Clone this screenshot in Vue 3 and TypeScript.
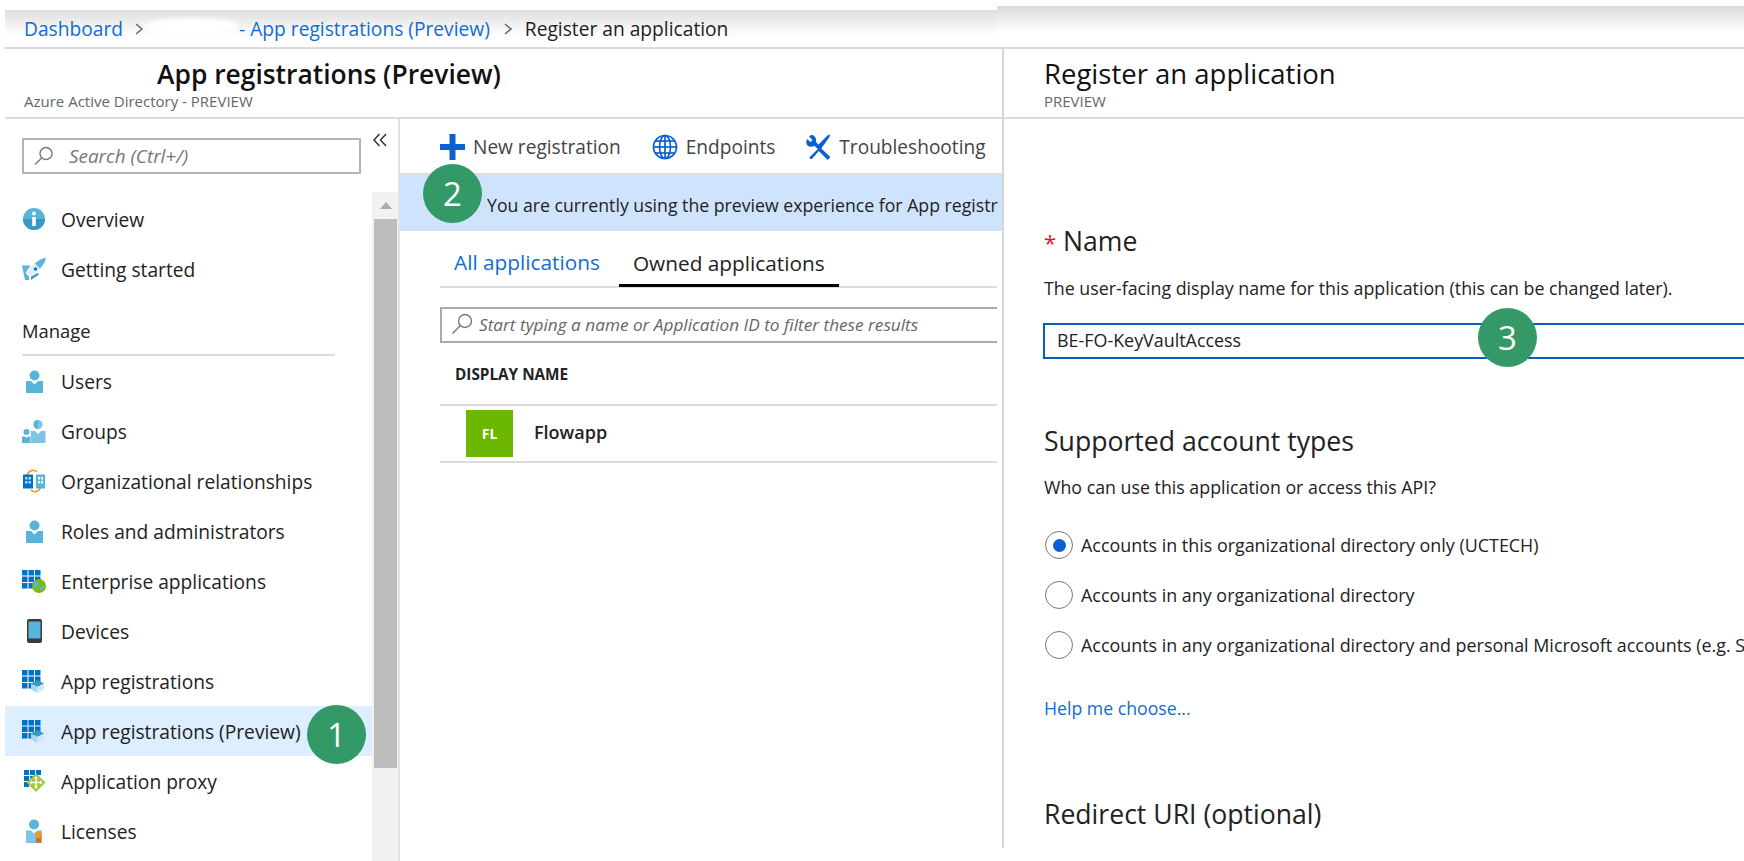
<template>
  <div class="page">
    <div class="main">
      <div class="crumbs">
        <a class="link">Dashboard</a>
        <svg class="sep first" width="10" height="14" viewBox="0 0 10 14"><polyline points="2,2 8,7 2,12" /></svg>
        <span class="blot"></span>
        <a class="link">- App registrations (Preview)</a>
        <svg class="sep" width="10" height="14" viewBox="0 0 10 14"><polyline points="2,2 8,7 2,12" /></svg>
        <span class="crumb-here">Register an application</span>
      </div>
      <div class="heading">
        <h1 class="title">App registrations (Preview)</h1>
        <div class="subtitle">Azure Active Directory - PREVIEW</div>
      </div>
      <div class="work">
        <aside class="nav">
          <div class="nav-top">
            <div class="search">
              <svg width="22" height="22" viewBox="0 0 22 22" class="lens"><circle cx="13" cy="8.5" r="6" /><line x1="8.6" y1="12.9" x2="2" y2="19.5" /></svg>
              <span>Search (Ctrl+/)</span>
            </div>
            <svg class="collapse" width="14" height="14" viewBox="0 0 14 14"><polyline points="6.5,1 1,7 6.5,13" /><polyline points="13,1 7.5,7 13,13" /></svg>
          </div>
          <div class="nav-body">
            <div class="nav-list">
              <template v-for="item in navItems" :key="item.label">
                <div v-if="item.icon === 'header'" class="nav-section">{{ item.label }}</div>
                <div v-else class="nav-item" :class="{ active: item.active }">
                  <svg class="nav-icon" width="24" height="24" viewBox="0 0 24 24">
                    <template v-if="item.icon === 'info'">
                      <circle cx="12" cy="12" r="11" fill="#59b4d9" />
                      <path d="M1 12a11 11 0 0 0 22 0z" fill="#3999c6" />
                      <circle cx="12" cy="6.5" r="2" fill="#fff" />
                      <rect x="10.2" y="10" width="3.6" height="9" fill="#fff" />
                    </template>
                    <template v-else-if="item.icon === 'rocket'">
                      <path d="M0 8.500h8.500L3.500 16l3.500 3.500V23H3z" fill="#59b4d9" />
                      <path d="M9 23l8-5.500-1.500-1.500-6.500 3.500z" fill="#3999c6" />
                      <path d="M24 .5C18 2 13 5 8.500 10.500L4.500 16l4 4 6-3.500C19.500 12 22.500 6.500 24 .5z" fill="#e4edf2" />
                      <path d="M24 .5C20 1.500 16 3.500 13 6.500l5 5C21 8.500 23 4.500 24 .5z" fill="#59b4d9" />
                      <circle cx="13.500" cy="12" r="1.700" fill="#0072c6" />
                    </template>
                    <template v-else-if="item.icon === 'user'">
                      <circle cx="12.500" cy="6.500" r="5" fill="#59b4d9" />
                      <path d="M4 12h5l3.500 3.500L16 12h5v12H4z" fill="#59b4d9" />
                    </template>
                    <template v-else-if="item.icon === 'group'">
                      <circle cx="16" cy="5.500" r="4.500" fill="#7fc4e2" />
                      <path d="M16 1a4.500 4.500 0 0 0 0 9z" fill="#59b4d9" />
                      <path d="M9 12h4l3 3 3-3h4.500v12H9z" fill="#7fc4e2" />
                      <circle cx="4.500" cy="13" r="3" fill="#59b4d9" />
                      <path d="M0 17.500h3l1.500 1.500L6 17.500h2.500V24H0z" fill="#59b4d9" />
                    </template>
                    <template v-else-if="item.icon === 'org'">
                      <path d="M5 6C7 1 12 0 15 3M19 18c-2 5-7 6-10 3" fill="none" stroke="#f7941d" stroke-width="1.500" />
                      <rect x="1" y="5.500" width="10" height="14" fill="#0072c6" />
                      <rect x="14" y="5.500" width="9" height="14" fill="#59b4d9" />
                      <path d="M3 8h2.500v2.500H3zm3.500 0H9v2.500H6.500zM3 12h2.500v2.500H3zm3.500 0H9v2.500H6.500z" fill="#a9d6ee" />
                      <path d="M16 8h2v2.500h-2zm3 0h2v2.500h-2zm-3 4h2v2.500h-2zm3 0h2v2.500h-2z" fill="#fff" />
                    </template>
                    <template v-else-if="item.icon === 'enterprise'">
                      <path d="M0 1h5.500v5.500H0zm6.500 0H12v5.500H6.500zM13 1h5.500v5.500H13zM0 7.500h5.500V13H0zm6.500 0H12V13H6.500zm6.500 0h5.500V13H13zM0 14h5.500v5.500H0zm6.500 0H12v5.500H6.500z" fill="#0072c6" />
                      <circle cx="17" cy="17" r="7" fill="#7fba00" />
                      <path d="M12 13c3-1 5 0 5 2s-3 2-3 4-1 2-2-1c-.6-2-.6-3 0-5zm8 3c2-.5 3 1 2 3s-3 3-4 2 0-4 2-5z" fill="#59b4d9" />
                    </template>
                    <template v-else-if="item.icon === 'device'">
                      <rect x="5" y="0" width="15" height="24" rx="2" fill="#3a3a3a" />
                      <rect x="6.500" y="2.500" width="12" height="17" fill="#59b4d9" />
                    </template>
                    <template v-else-if="item.icon === 'apps'">
                      <path d="M0 1h5.500v5.500H0zm6.500 0H12v5.500H6.500zM13 1h5.500v5.500H13zM0 7.500h5.500V13H0zm6.500 0H12V13H6.500zm6.500 0h5.500V13H13zM0 14h5.500v5.500H0zm6.500 0H12v5.500H6.500z" fill="#0072c6" />
                      <path d="M15.500 11l6.500 3.500-6.500 3.500L9 14.500z" fill="#3999c6" />
                      <path d="M9 14.500l6.500 3.500v6L9 20.500z" fill="#a9d6ee" />
                      <path d="M22 14.500L15.500 18v6l6.500-3.500z" fill="#cfe8f5" />
                    </template>
                    <template v-else-if="item.icon === 'proxy'">
                      <path d="M2 1h5v5H2zm6 0h5v5H8zm6 0h5v5h-5zM2 7h5v5H2zm6 0h5v5H8zM2 13h5v5H2z" fill="#0072c6" />
                      <path d="M14 4l9.500 9.500L14 23l-9.500-9.500z" fill="#a4c639" />
                      <path d="M14 7l2.200 2.500h-1.500v3.300H18V11.300l2.500 2.200-2.500 2.200v-1.500h-3.300v3.300h1.500L14 20l-2.200-2.500h1.500v-3.300H10v1.500l-2.500-2.200 2.500-2.200v1.500h3.300V9.500h-1.500z" fill="#fff" />
                    </template>
                    <template v-else-if="item.icon === 'license'">
                      <circle cx="12" cy="5.500" r="5" fill="#59b4d9" />
                      <path d="M4 11.500h5l3 3 3-3h5V24H4z" fill="#7fc4e2" />
                      <path d="M14 17h5v8l-2.500-2-2.500 2z" fill="#dc6a1d" />
                      <circle cx="16.500" cy="16" r="3.200" fill="#f7941d" />
                    </template>
                  </svg>
                  <span>{{ item.label }}</span>
                </div>
              </template>
            </div>
            <div class="scroll">
              <span class="scroll-up"></span>
              <div class="scroll-thumb"></div>
            </div>
          </div>
        </aside>

        <section class="content">
          <div class="toolbar">
            <div class="tool tool-new">
              <svg width="25" height="26" viewBox="0 0 25 26"><path d="M9.500 0h6v10h9.500v6h-9.500v10h-6V16H0v-6h9.500z" fill="#0b5fd3" /></svg>
              <span>New registration</span>
            </div>
            <div class="tool">
              <svg width="26" height="26" viewBox="0 0 26 26" class="globe"><circle cx="13" cy="13" r="11.500" /><ellipse cx="13" cy="13" rx="5.500" ry="11.500" /><line x1="13" y1="1.500" x2="13" y2="24.500" /><line x1="1.500" y1="13" x2="24.500" y2="13" /><line x1="3.500" y1="7" x2="22.500" y2="7" /><line x1="3.500" y1="19" x2="22.500" y2="19" /></svg>
              <span>Endpoints</span>
            </div>
            <div class="tool">
              <svg width="25" height="26" viewBox="0 0 25 26"><path d="M5 1L3 2.500l3.500 3.500-2 2L1 5 .3 7.500c-.5 3 2.500 6 6 5l2.500-.5 3 3-8 8c-.6 1 .4 2.500 2 2l7-8 3 3 6 6 2.500-3-9-8.500 1-1.500L23.500 3 24 .5l-2 .5-9.500 9.500L10 8c1-4-2-7.500-5-7z" fill="#0b5fd3" /></svg>
              <span>Troubleshooting</span>
            </div>
          </div>
          <div class="banner"><span>You are currently using the preview experience for App registr</span></div>
          <div class="apps-pane">
            <div class="tabs">
              <div class="tab tab-link">All applications</div>
              <div class="tab tab-on">Owned applications</div>
            </div>
            <div class="filter">
              <svg width="24" height="24" viewBox="0 0 24 24" class="lens"><circle cx="15" cy="9" r="6.500" /><line x1="10.200" y1="13.800" x2="2.500" y2="21.500" /></svg>
              <span>Start typing a name or Application ID to filter these results</span>
            </div>
            <div class="col-head">DISPLAY NAME</div>
            <div class="app-row">
              <div class="app-badge">FL</div>
              <div class="app-name">Flowapp</div>
            </div>
          </div>
        </section>
      </div>
    </div>

    <div class="blade">
      <div class="blade-top"></div>
      <div class="blade-inner">
        <div class="heading blade-heading">
          <h1 class="title">Register an application</h1>
          <div class="subtitle">PREVIEW</div>
        </div>
        <div class="form">
          <h2 class="field-title name-title"><span class="req">*</span> Name</h2>
          <p class="hint">The user-facing display name for this application (this can be changed later).</p>
          <div class="name-input">BE-FO-KeyVaultAccess</div>
          <h2 class="field-title types-title">Supported account types</h2>
          <p class="hint">Who can use this application or access this API?</p>
          <div class="radios">
            <div v-for="(opt, i) in accountTypes" :key="opt" class="radio-row">
              <span class="radio"><span v-if="i === 0" class="radio-dot"></span></span>
              <span>{{ opt }}</span>
            </div>
          </div>
          <a class="help">Help me choose...</a>
          <h2 class="field-title redirect-title">Redirect URI (optional)</h2>
        </div>
      </div>
    </div>

    <div class="step step-1">1</div>
    <div class="step step-2">2</div>
    <div class="step step-3">3</div>
  </div>
</template>

<script setup lang="ts">
interface NavItem {
  label: string;
  icon: string;
  active?: boolean;
}

const navItems: NavItem[] = [
  { label: 'Overview', icon: 'info' },
  { label: 'Getting started', icon: 'rocket' },
  { label: 'Manage', icon: 'header' },
  { label: 'Users', icon: 'user' },
  { label: 'Groups', icon: 'group' },
  { label: 'Organizational relationships', icon: 'org' },
  { label: 'Roles and administrators', icon: 'user' },
  { label: 'Enterprise applications', icon: 'enterprise' },
  { label: 'Devices', icon: 'device' },
  { label: 'App registrations', icon: 'apps' },
  { label: 'App registrations (Preview)', icon: 'apps', active: true },
  { label: 'Application proxy', icon: 'proxy' },
  { label: 'Licenses', icon: 'license' },
];

const accountTypes = [
  'Accounts in this organizational directory only (UCTECH)',
  'Accounts in any organizational directory',
  'Accounts in any organizational directory and personal Microsoft accounts (e.g. S',
];
</script>

<style>
html,
body {
  margin: 0;
  background: #fff;
}
</style>

<style scoped>
.page {
  position: relative;
  display: flex;
  width: 1744px;
  height: 861px;
  overflow: hidden;
  background: #fff;
  color: #222;
  font-family: "Open Sans", "Liberation Sans", sans-serif;
  font-size: 19.2px;
}

.main {
  width: 997px;
  margin-left: 5px;
  flex: none;
  display: flex;
  flex-direction: column;
}

.crumbs {
  display: flex;
  align-items: center;
  height: 37px;
  margin-top: 10px;
  width: 992px;
  padding-left: 19px;
  box-sizing: border-box;
  background: linear-gradient(#dedede, #fff 68%);
  font-size: 19.2px;
}

.link {
  color: #0f6cd6;
}

.sep {
  fill: none;
  stroke: #666;
  stroke-width: 1.5;
  margin: 0 12px 0 13px;
}

.sep.first {
  margin: 0 0 0 11px;
}

.blot {
  width: 95px;
  height: 16px;
  margin-top: -6px;
  background: #fff;
  border-radius: 50%;
  filter: blur(2px);
}

.crumb-here {
  color: #222;
}

.heading {
  box-sizing: border-box;
  height: 72px;
  border-top: 2px solid #dcdcdc;
  border-bottom: 2px solid #dcdcdc;
  padding-left: 19px;
  position: relative;
}

.title {
  margin: 7px 0 0 133px;
  font-size: 26.4px;
  line-height: 36px;
  font-weight: 600;
  color: #111;
}

.subtitle {
  font-size: 15px;
  line-height: 18px;
  color: #666;
}

.work {
  display: flex;
  flex: 1;
  min-height: 0;
}

.nav {
  width: 395px;
  flex: none;
  border-right: 2px solid #e2e2e2;
  box-sizing: border-box;
  display: flex;
  flex-direction: column;
}

.nav-top {
  height: 73px;
  flex: none;
  display: flex;
  padding: 19px 0 0 17px;
  box-sizing: border-box;
}

.search {
  box-sizing: border-box;
  width: 339px;
  height: 36px;
  border: 2px solid #b4b4b4;
  display: flex;
  align-items: center;
  gap: 14px;
  padding-left: 9px;
  font-style: italic;
  font-size: 18.9px;
  color: #777;
}

.lens {
  fill: none;
  stroke: #777;
  stroke-width: 1.4;
  flex: none;
}

.collapse {
  fill: none;
  stroke: #333;
  stroke-width: 1.5;
  margin: -5px 0 0 12px;
}

.nav-body {
  flex: 1;
  display: flex;
  min-height: 0;
}

.nav-list {
  width: 367px;
  flex: none;
  padding-top: 2px;
}

.nav-item {
  display: flex;
  align-items: center;
  gap: 15px;
  height: 50px;
  padding-left: 17px;
  box-sizing: border-box;
  white-space: nowrap;
}

.nav-item.active {
  background: #dceeff;
}

.nav-icon {
  flex: none;
}

.nav-section {
  box-sizing: border-box;
  height: 62px;
  margin: 0 37px 0 17px;
  padding-top: 24px;
  line-height: 26px;
  border-bottom: 2px solid #dcdcdc;
  font-weight: 500;
  font-size: 18.4px;
}

.scroll {
  flex: 1;
  background: #f1f1f1;
  padding: 0 1px 0 2px;
  display: flex;
  flex-direction: column;
  align-items: stretch;
}

.scroll-up {
  align-self: center;
  width: 0;
  height: 0;
  margin-top: 10px;
  border-left: 6px solid transparent;
  border-right: 6px solid transparent;
  border-bottom: 7px solid #aaa;
}

.scroll-thumb {
  height: 549px;
  margin-top: 10px;
  background: #bdbdbd;
}

.content {
  flex: 1;
  min-width: 0;
}

.toolbar {
  box-sizing: border-box;
  height: 56px;
  border-bottom: 2px solid #dcdcdc;
  display: flex;
  align-items: center;
  padding: 2px 0 0 40px;
  gap: 31px;
  color: #444;
  font-size: 19.1px;
}

.tool {
  display: flex;
  align-items: center;
  gap: 8px;
  white-space: nowrap;
}

.globe {
  fill: none;
  stroke: #0b5fd3;
  stroke-width: 1.7;
}

.banner {
  height: 56px;
  background: #cfe3fc;
  display: flex;
  padding-left: 87px;
  padding-right: 5px;
  align-items: center;
  white-space: nowrap;
  overflow: hidden;
  font-size: 17.7px;
  padding-top: 4px;
  box-sizing: border-box;
}

.apps-pane {
  margin-left: 40px;
  width: 557px;
  overflow: hidden;
}

.tabs {
  display: flex;
  height: 57px;
  border-bottom: 2px solid #dcdcdc;
  box-sizing: border-box;
  align-items: flex-end;
  gap: 5px;
  font-size: 20.8px;
}

.tab {
  box-sizing: border-box;
  height: 55px;
  padding: 17px 14px 0;
  white-space: nowrap;
}

.tab-link {
  color: #0f6cd6;
}

.tab-on {
  border-bottom: 3px solid #000;
  margin-bottom: -1px;
}

.filter {
  box-sizing: border-box;
  width: 580px;
  height: 36px;
  margin-top: 19px;
  border: 2px solid #aaa;
  display: flex;
  align-items: center;
  gap: 5px;
  padding: 0 0 2px 8px;
  font-style: italic;
  font-size: 17.2px;
  color: #666;
  white-space: nowrap;
}

.col-head {
  box-sizing: border-box;
  height: 63px;
  border-bottom: 2px solid #dcdcdc;
  padding: 21px 0 0 15px;
  font-size: 15.3px;
  font-weight: 700;
  color: #222;
}

.app-row {
  box-sizing: border-box;
  height: 57px;
  border-bottom: 2px solid #dcdcdc;
  display: flex;
  align-items: center;
  padding-left: 26px;
  gap: 21px;
}

.app-badge {
  width: 47px;
  height: 47px;
  background: #6bb700;
  color: #fff;
  font-size: 14px;
  font-weight: 700;
  display: flex;
  align-items: center;
  justify-content: center;
}

.app-name {
  font-weight: 600;
  font-size: 18px;
  padding-bottom: 3px;
  color: #222;
}

.blade {
  flex: 1;
  min-width: 0;
  display: flex;
  flex-direction: column;
}

.blade-top {
  height: 41px;
  margin-top: 6px;
  margin-left: -5px;
  background: linear-gradient(#d9d9d9, #fff 62%);
}

.blade-inner {
  height: 801px;
  border-left: 2px solid #d6d6d6;
  box-sizing: border-box;
  overflow: hidden;
}

.blade-heading {
  padding-left: 40px;
}

.blade-heading .title {
  margin-left: 0;
  font-size: 27.5px;
  font-weight: 500;
}

.form {
  padding-left: 40px;
}

.field-title {
  margin: 0;
  font-size: 26.6px;
  line-height: 36px;
  font-weight: 400;
  color: #222;
  white-space: nowrap;
}

.name-title {
  margin-top: 104px;
}

.req {
  color: #e81123;
  font-size: 22px;
}

.hint {
  margin: 16px 0 0;
  line-height: 24px;
  font-size: 17.8px;
  white-space: nowrap;
}

.name-input {
  box-sizing: border-box;
  width: 720px;
  height: 36px;
  margin: 23px 0 0 -1px;
  padding: 0 0 2px 12px;
  border: 2px solid #0a5ebb;
  display: flex;
  align-items: center;
  font-size: 17.9px;
}

.types-title {
  margin-top: 64px;
}

.radios {
  margin-top: 21px;
}

.radio-row {
  display: flex;
  align-items: center;
  gap: 8px;
  height: 50px;
  padding-left: 1px;
  font-size: 17.9px;
  white-space: nowrap;
}

.radio {
  box-sizing: border-box;
  width: 28px;
  height: 28px;
  flex: none;
  border: 1.5px solid #777;
  border-radius: 50%;
  display: flex;
  align-items: center;
  justify-content: center;
}

.radio-dot {
  width: 13px;
  height: 13px;
  border-radius: 50%;
  background: #0b5fd3;
}

.help {
  display: block;
  margin-top: 26px;
  line-height: 24px;
  font-size: 17.7px;
  color: #0f6cd6;
}

.redirect-title {
  margin-top: 76px;
}

.step {
  position: absolute;
  width: 59px;
  height: 59px;
  border-radius: 50%;
  background: #339966;
  color: #fff;
  font-size: 33px;
  line-height: 59px;
  text-align: center;
}

.step-1 {
  left: 307px;
  top: 705px;
}

.step-2 {
  left: 423px;
  top: 164px;
}

.step-3 {
  left: 1478px;
  top: 308px;
}
</style>
